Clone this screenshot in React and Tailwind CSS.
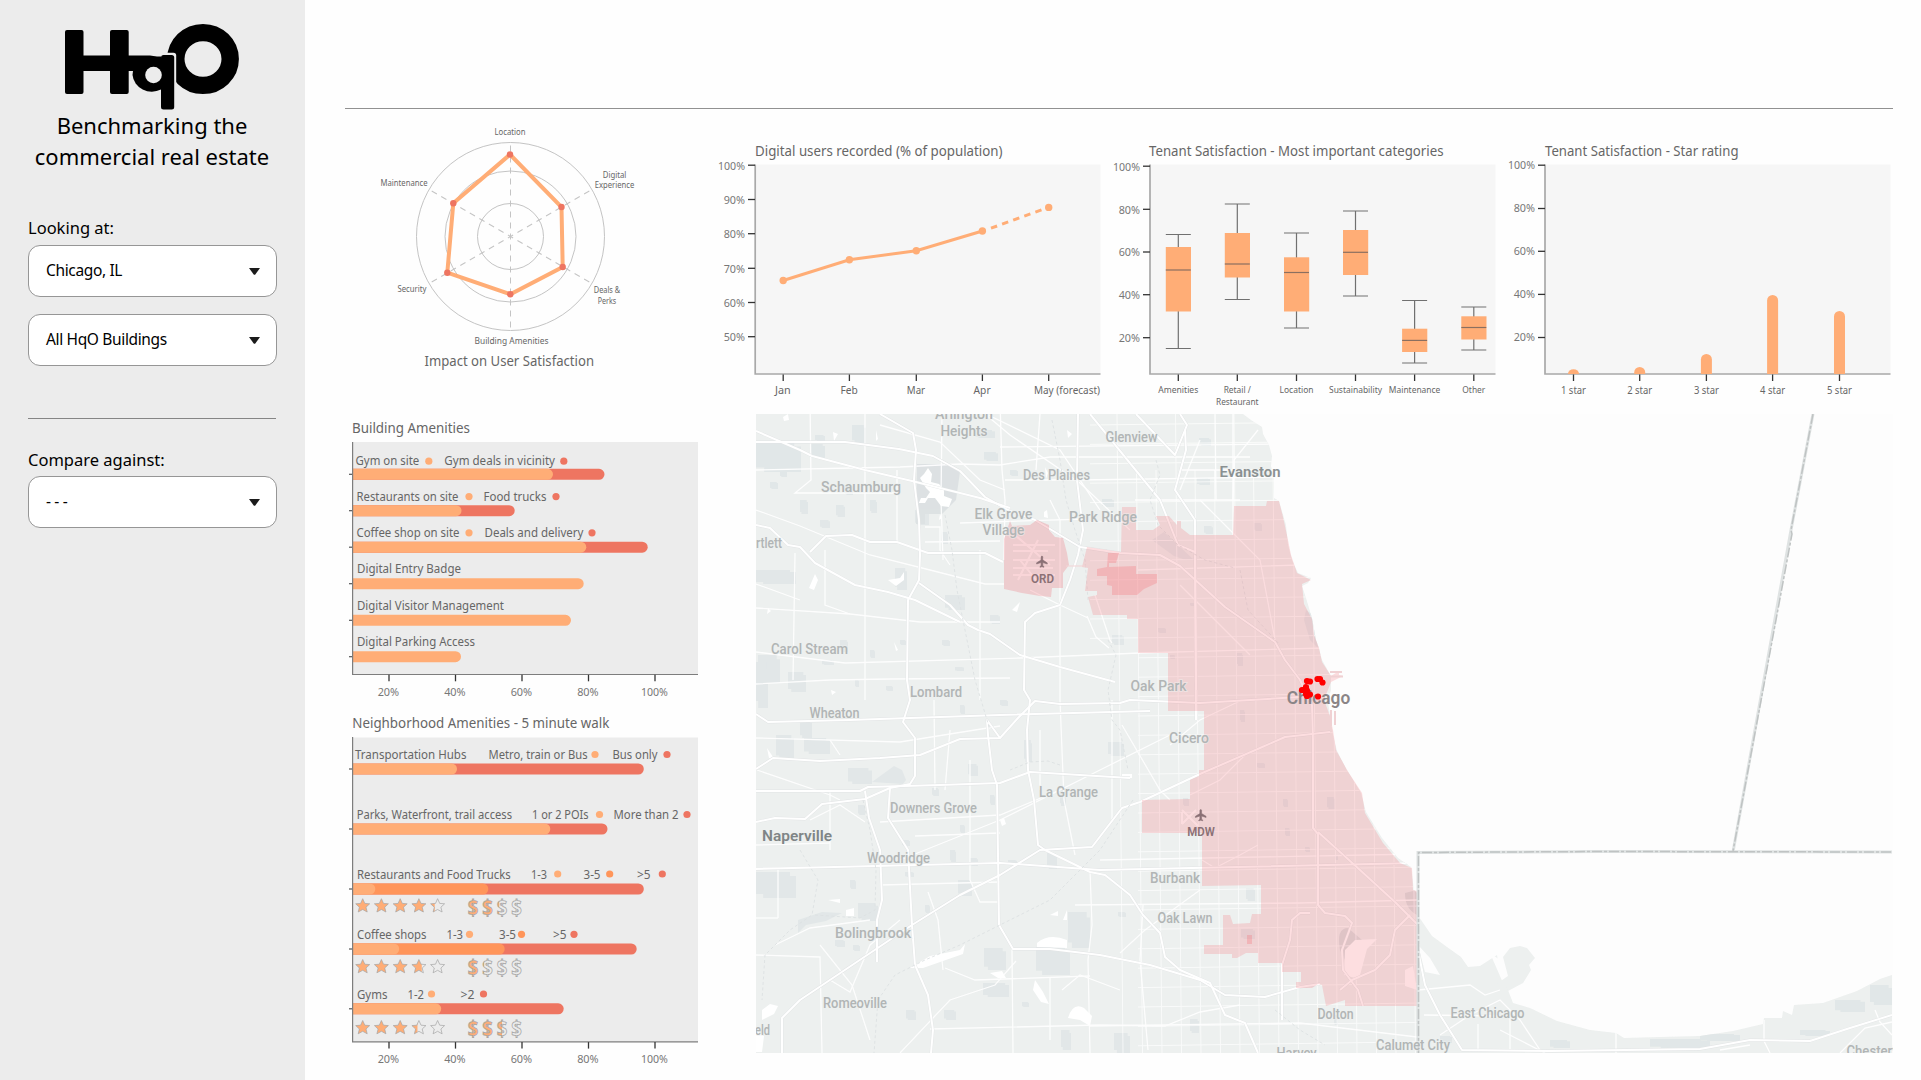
import React from "react";

const ORANGE = "#ffad76";
const DEEP = "#ff955a";
const RED = "#ee7561";

/* Chart label: x/y is the baseline point, w the set width of the string. */
function T({ x, y, w, s = 12, a = "start", fill = "#666", children, ...rest }) {
  return (
    <text x={x} y={y} fontSize={s} textAnchor={a} fill={fill} textLength={w} lengthAdjust="spacingAndGlyphs" {...rest}>
      {children}
    </text>
  );
}

function Chart({ x, y, w, h, children }) {
  return (
    <svg viewBox={`${x} ${y} ${w} ${h}`} width={w} height={h} className="block shrink-0">
      {children}
    </svg>
  );
}

function Logo() {
  return (
    <svg viewBox="60 20 184 92" width="184" height="92" className="block" aria-label="HqO">
      <ellipse cx="203" cy="59" rx="27.200" ry="26.400" fill="none" stroke="#000" strokeWidth="17.400" />
      <path d="M165 52.800h8.500q2.700 0 2.700 2.700V84l-4 5h-9z" fill="#ececec" />
      <rect x="65" y="30" width="18.500" height="64" rx="2" />
      <rect x="110" y="30" width="18.700" height="64" rx="2" />
      <path d="M80 55.500h70q7 .5 11 4V71H80z" />
      <path d="M161 89.500a19.500 18.500 0 0 1-28.500-14.500q0-12 10-18.500H161z" />
      <rect x="161" y="55" width="13.200" height="54.500" rx="2.500" />
      <circle cx="153.500" cy="75" r="8.300" fill="#ececec" />
    </svg>
  );
}

function Select({ children, className = "" }) {
  return (
    <button
      className={`flex h-[52px] w-[249px] items-center justify-between rounded-[12px] border border-[#969696] bg-white pr-[16px] pl-[17px] text-left text-[15.5px] tracking-[-0.35px] text-black ${className}`}
    >
      <span className="-mt-[1px]">{children}</span>
      <svg width="11" height="7" viewBox="0 0 11 7"><path d="M0 0h11L6.500 6.200q-1 1.200-2 0z" fill="#1b1b1b" /></svg>
    </button>
  );
}

function Sidebar() {
  return (
    <aside className="flex h-[1080px] w-[305px] shrink-0 flex-col bg-[#ececec] pl-[28px] text-black">
      <div className="mt-[20px] pl-[32px]"><Logo /></div>
      <h1 className="-mt-[2px] w-[248px] text-center text-[22px] leading-[30.5px] whitespace-nowrap">
        Benchmarking the
        <br />
        commercial real estate
      </h1>
      <div className="mt-[45px] h-[29px] text-[16.5px] leading-[24px]">Looking at:</div>
      <Select>Chicago, IL</Select>
      <Select className="mt-[17px]">All HqO Buildings</Select>
      <hr className="mt-[52px] w-[248px] border-[#858585]" />
      <div className="mt-[29px] h-[28px] text-[16.5px] leading-[24px]">Compare against:</div>
      <Select>- - -</Select>
    </aside>
  );
}

function Radar() {
  const spokes = [0, 60, 120, 180, 240, 300];
  const pts = [[510, 154.5], [561.5, 207], [562.7, 267], [510.3, 294.3], [447.3, 272.7], [453.3, 203.3]];
  return (
    <Chart x={345} y={109} w={370} h={300}>
      {[94, 65.5, 33].map((r) => <circle key={r} cx="510.5" cy="236.500" r={r} fill="none" stroke="#c4c4c4" />)}
      {spokes.map((d) => (
        <line key={d} x1="510.500" y1="236.500" x2="510.500" y2="142.500" stroke="#c4c4c4" strokeDasharray="6 5" strokeDashoffset="3" transform={`rotate(${d} 510.5 236.5)`} />
      ))}
      <polygon points={pts.join(" ")} fill="none" stroke={ORANGE} strokeWidth="4" />
      {pts.map(([x, y]) => <circle key={y} cx={x} cy={y} r="3.200" fill={RED} />)}
      <T x={510} y={135} w={31} s={8.2} a="middle">Location</T>
      <T x={614.5} y={177.500} w={23.500} s={8.200} a="middle">Digital</T>
      <T x={614.500} y={188.300} w={39.500} s={8.200} a="middle">Experience</T>
      <T x={404} y={185.500} w={47} s={8.200} a="middle">Maintenance</T>
      <T x={412} y={292} w={29} s={8.200} a="middle">Security</T>
      <T x={607} y={293} w={26.500} s={8.200} a="middle">Deals &amp;</T>
      <T x={607} y={304} w={18.500} s={8.200} a="middle">Perks</T>
      <T x={511.500} y={343.500} w={74} s={8.200} a="middle">Building Amenities</T>
      <T x={424.500} y={366.300} w={169.500} s={14}>Impact on User Satisfaction</T>
    </Chart>
  );
}

function YAxis({ x, ticks, labels, dy = 4.3 }) {
  return ticks.map((y, i) => (
    <g key={y}>
      <line x1={x - 7} x2={x} y1={y} y2={y} stroke="#333" strokeWidth="1.300" />
      <T x={x - 10} y={y + dy} w={labels[i].length === 4 ? 27 : 21.300} s={11.500} a="end" fill="#777">{labels[i]}</T>
    </g>
  ));
}

function Plot({ x, w }) {
  return (
    <>
      <rect x={x} y="164.500" width={w} height="210" fill="#f6f6f6" />
      <path d={`M${x} 164.500V374H${x + w}`} fill="none" stroke="#a9a9a9" strokeWidth="1.700" />
    </>
  );
}

const XTick = ({ x, y = 374.500 }) => <line x1={x} x2={x} y1={y} y2={y + 6.500} stroke="#333" strokeWidth="1.300" />;

function UsersChart() {
  const pts = [[783.2, 280.5], [849.4, 259.8], [916.3, 250.7], [982.4, 231], [1048.700, 207.400]];
  const labels = [["Jan", 15.700], ["Feb", 17.300], ["Mar", 18.300], ["Apr", 17], ["May (forecast)", 66]];
  return (
    <Chart x={715} y={109} w={395} h={305}>
      <T x={755} y={156.300} w={247.500} s={14}>Digital users recorded (% of population)</T>
      <Plot x={755.200} w={345.300} />
      <YAxis x={755} ticks={[165.200, 199.500, 233.700, 268.300, 302.500, 336.700]} labels={["100%", "90%", "80%", "70%", "60%", "50%"]} />
      <polyline points={pts.slice(0, 4).join(" ")} fill="none" stroke={ORANGE} strokeWidth="3" />
      <path d="M991 228.200L1045 208.600" stroke={ORANGE} strokeWidth="3" strokeDasharray="6.500 5.300" />
      {pts.map(([x, y], i) => (
        <g key={x}>
          <circle cx={x} cy={y} r="3.700" fill={ORANGE} />
          <XTick x={x} />
          <T x={i === 4 ? 1067 : x - 0.300} y={394} w={labels[i][1]} s={11.500} a="middle">{labels[i][0]}</T>
        </g>
      ))}
    </Chart>
  );
}

function BoxChart() {
  const data = [
    [1178.300, 234.500, 247, 270, 311.500, 348.500, "Amenities", 40],
    [1237.300, 204, 233, 264, 277.500, 299.500, "Retail /", 27.300],
    [1296.500, 233, 257.300, 272.500, 311.500, 328, "Location", 34],
    [1355.500, 211, 230, 252.300, 275, 296, "Sustainability", 53],
    [1414.600, 300.500, 328.700, 340.400, 352, 363, "Maintenance", 51.500],
    [1473.800, 307, 316.300, 327.500, 339.500, 350, "Other", 23],
  ];
  return (
    <Chart x={1110} y={109} w={396} h={305}>
      <T x={1149} y={156.300} w={294.500} s={14}>Tenant Satisfaction - Most important categories</T>
      <Plot x={1150} w={345.500} />
      <YAxis x={1150} ticks={[166.200, 209.300, 252, 294.700, 337.700]} labels={["100%", "80%", "60%", "40%", "20%"]} />
      {data.map(([x, top, q3, med, q1, bot, label, w]) => (
        <g key={x} stroke="#707070" strokeWidth="1.200">
          <path d={`M${x - 12.500} ${top}h25M${x - 12.500} ${bot}h25M${x} ${top}V${bot}`} />
          <rect x={x - 12.500} y={q3} width="25.200" height={q1 - q3} fill={ORANGE} stroke="none" />
          <path d={`M${x - 12.500} ${med}h25`} stroke="#8b6f60" />
          <g stroke="none">
            <T x={x} y={393} w={w} s={9.300} a="middle">{label}</T>
          </g>
          <XTick x={x} />
        </g>
      ))}
      <T x={1237.300} y={405} w={42.500} s={9.300} a="middle">Restaurant</T>
    </Chart>
  );
}

function StarChart() {
  const bars = [[1573.500, 369.200], [1639.700, 367], [1706.400, 354], [1772.600, 295], [1839.500, 311]];
  return (
    <Chart x={1506} y={109} w={415} h={305}>
      <T x={1545} y={156.300} w={193.500} s={14}>Tenant Satisfaction - Star rating</T>
      <Plot x={1545} w={345.500} />
      <YAxis x={1545} ticks={[165.200, 208.500, 251.300, 294.400, 337.500]} labels={["100%", "80%", "60%", "40%", "20%"]} dy={3.500} />
      {bars.map(([x, top], i) => (
        <g key={x}>
          <path d={`M${x - 5.500} 374V${Math.min(374, top + 5.500)}a5.500 ${Math.min(5.500, 374 - top)} 0 0 1 11 0V374z`} fill={ORANGE} />
          <XTick x={x} />
          <T x={x} y={394} w={25} s={11.500} a="middle">{`${i + 1} star`}</T>
        </g>
      ))}
    </Chart>
  );
}

/* Horizontal bar built from overlapping segments, the longest drawn first. */
function HBar({ y, segs }) {
  return (
    <g>
      {[...segs].reverse().map(([end, color]) => (
        <path key={end} d={`M353 ${y - 5.500}H${end - 5.500}a5.500 5.500 0 0 1 0 11H353z`} fill={color} />
      ))}
      <line x1="349" x2="353" y1={y} y2={y} stroke="#555" strokeWidth="1.200" />
    </g>
  );
}

function PercentAxis({ top, bottom }) {
  return (
    <>
      <path d={`M352.600 ${top}V${bottom}H698`} fill="none" stroke="#7d7d7d" strokeWidth="1.200" />
      {[[389, "20%"], [455.500, "40%"], [522, "60%"], [588.500, "80%"], [655, "100%"]].map(([x, l]) => (
        <g key={l}>
          <XTick x={x} y={bottom + 0.300} />
          <T x={x - 0.600} y={bottom + 21.100} w={l.length === 4 ? 27 : 21.500} s={11.500} a="middle" fill="#777">{l}</T>
        </g>
      ))}
    </>
  );
}

const Dots = ({ items }) => items.map(([x, y, c]) => <circle key={`${x}-${y}`} cx={x} cy={y} r="3.600" fill={c} />);

const Labels = ({ items }) =>
  items.map(([x, end, y, s]) => <T key={`${x}-${y}`} x={x} y={y} w={end - x} s={12}>{s}</T>);

function BuildingChart() {
  return (
    <Chart x={345} y={409} w={370} h={297}>
      <T x={352} y={433.300} w={118} s={14}>Building Amenities</T>
      <rect x="353" y="442" width="345" height="232" fill="#ececec" />
      <Labels
        items={[
          [355.500, 419.300, 464.700, "Gym on site"], [444.300, 555, 464.700, "Gym deals in vicinity"],
          [356.500, 458.500, 500.700, "Restaurants on site"], [483.500, 546.500, 500.700, "Food trucks"],
          [356.500, 459.500, 537, "Coffee shop on site"], [484.500, 583.500, 537, "Deals and delivery"],
          [357, 461, 573.300, "Digital Entry Badge"], [357, 504, 609.500, "Digital Visitor Management"], [357, 475, 645.500, "Digital Parking Access"],
        ]}
      />
      <Dots items={[[428.800, 461.200, ORANGE], [563.800, 461.200, RED], [469, 496.600, ORANGE], [556, 496.600, RED], [469, 532.800, ORANGE], [592, 532.800, RED]]} />
      <HBar y={474.300} segs={[[553, ORANGE], [604.500, RED]]} />
      <HBar y={510.700} segs={[[461.500, ORANGE], [514.700, RED]]} />
      <HBar y={547.200} segs={[[586.300, ORANGE], [647.700, RED]]} />
      <HBar y={583.700} segs={[[583.700, ORANGE]]} />
      <HBar y={620.300} segs={[[571, ORANGE]]} />
      <HBar y={656.700} segs={[[461, ORANGE]]} />
      <PercentAxis top={442} bottom={674.500} />
    </Chart>
  );
}

const STAR = "M0 -7L2.100 -2.300L7 -1.900L3.300 1.500L4.500 6.300L0 3.800L-4.500 6.300L-3.300 1.500L-7 -1.900L-2.100 -2.300Z";

function Ratings({ y, id, stars, dollars }) {
  const part = (n, i) => Math.max(0, Math.min(1, n - i));
  return (
    <g stroke="#a5a5a5" strokeWidth="0.700">
      {[362.700, 381.400, 400.200, 418.900, 437.600].map((x, i) => (
        <g key={x} transform={`translate(${x} ${y})`}>
          <clipPath id={`s${id}${i}`}><rect x="-7.200" y="-8" width={14.400 * part(stars, i)} height="16" /></clipPath>
          <path d={STAR} fill={ORANGE} stroke="none" clipPath={`url(#s${id}${i})`} />
          <path d={STAR} fill="none" />
        </g>
      ))}
      {[473, 487.500, 502, 516.500].map((x, i) => {
        const glyph = { x: 0, y: 6.600, fontSize: 18.500, fontWeight: 700, textAnchor: "middle" };
        return (
          <g key={x} transform={`translate(${x} ${y + 1.500}) scale(1 1.12)`}>
            <clipPath id={`d${id}${i}`}><rect x="-5.500" y="-12" width={11 * part(dollars, i)} height="24" /></clipPath>
            <text {...glyph} fill={ORANGE} stroke="none" clipPath={`url(#d${id}${i})`}>$</text>
            <text {...glyph} fill="none">$</text>
          </g>
        );
      })}
    </g>
  );
}

function NeighborhoodChart() {
  return (
    <Chart x={345} y={706} w={370} h={374}>
      <T x={352.300} y={728} w={257} s={14}>Neighborhood Amenities - 5 minute walk</T>
      <rect x="353" y="737.500" width="345" height="304" fill="#ececec" />
      <Labels
        items={[
          [355, 466.500, 759.300, "Transportation Hubs"], [488.500, 587.500, 759.300, "Metro, train or Bus"], [612.500, 657.500, 759.300, "Bus only"],
          [356.700, 512, 819, "Parks, Waterfront, trail access"], [532, 588.500, 819, "1 or 2 POIs"], [613.500, 678.500, 819, "More than 2"],
          [357, 510.700, 878.700, "Restaurants and Food Trucks"], [531, 547, 878.700, "1-3"], [583.500, 600.500, 878.700, "3-5"], [637, 650.500, 878.700, ">5"],
          [357, 426.500, 938.500, "Coffee shops"], [446.500, 463, 938.500, "1-3"], [499, 516, 938.500, "3-5"], [553, 566.500, 938.500, ">5"],
          [357, 387.500, 998.500, "Gyms"], [407.500, 424, 998.500, "1-2"], [460.500, 474.500, 998.500, ">2"],
        ]}
      />
      <Dots
        items={[
          [595, 754.500, ORANGE], [667, 754.500, RED], [599.500, 814.500, ORANGE], [687, 814.500, RED],
          [557.700, 874, ORANGE], [609.700, 874, DEEP], [662.300, 874, RED], [469.500, 934.300, ORANGE], [521.500, 934.300, DEEP], [574, 934.300, RED],
          [431.500, 994, ORANGE], [483.500, 994, RED],
        ]}
      />
      <HBar y={769} segs={[[457, ORANGE], [643.800, RED]]} />
      <HBar y={829} segs={[[550.300, ORANGE], [607.500, RED]]} />
      <HBar y={889} segs={[[375.300, ORANGE], [488.300, DEEP], [643.800, RED]]} />
      <HBar y={949} segs={[[399.200, ORANGE], [504.700, DEEP], [636.700, RED]]} />
      <HBar y={1008.800} segs={[[441.200, ORANGE], [563.700, RED]]} />
      <Ratings id="a" y={905.700} stars={4.300} dollars={2.250} />
      <Ratings id="b" y={966.500} stars={3.700} dollars={1.200} />
      <Ratings id="c" y={1027.500} stars={3.400} dollars={2.500} />
      <PercentAxis top={737} bottom={1041.800} />
    </Chart>
  );
}

const LAND =
  "M756 414H1243L1251 420L1262 427L1263 434L1269 445L1272 456L1271 466L1274 480L1274 498L1279 501L1286 525L1288 545L1292 560L1298 573L1311 578L1308 583L1302 586L1306 598L1312 618L1316 640L1319 648L1322 660L1331 676L1331 690L1328 702L1333 735L1337 751L1347 770L1361 793L1366 812L1382 838L1398 858L1411 867L1414 890L1417 893L1419 917L1432 936L1447 947L1461 957L1468 967L1480 966L1497 955L1499 968L1506 976L1506 985L1513 1003L1530 1008L1557 1021L1590 1030L1616 1033L1624 1038L1660 1037L1700 1036L1733 1031L1763 1024L1764 1018L1782 1018L1783 1011L1792 1015L1794 1005L1823 1003L1857 991L1880 979L1892 975V1053H756Z";

const CITY =
  "M1234 506H1266L1267 501L1279 501L1283 517L1288 540L1291 555L1297 573L1311 580L1302 584L1304 604L1312 619L1314 635L1319 648L1322 662L1331 676L1339 671V675L1343 676L1331 682L1324 700L1330 716L1333 730L1336 750L1347 770L1362 793L1365 813L1383 843L1400 863L1412 868L1413 890L1417 891V1006H1345V1000L1326 1006L1322 985L1318 984L1312 988H1296V982H1301V972H1282V963H1258V953H1246L1237 958H1232V954H1204V945H1223V915H1230L1233 924L1250 923L1252 914H1261V885L1202 886V833H1142V800L1190 799V780L1199 776V770H1204V711H1168V653H1138V619H1127V615H1093L1088 597L1097 595V591H1085L1088 568L1082 567L1087 547L1121 552L1122 507H1136V530H1153L1160 525L1156 516H1169L1177 525V521H1181V528L1190 535H1233Z";

const OHARE =
  "M1004 539L1010 521L1012 526L1030 525L1037 520L1049 525V530L1055 537L1063 538L1067 553L1069 565L1063 573V588H1052L1051 597L1040 596L1022 593L1004 589Z";

const ENCLAVE =
  "M1108 553H1119L1116 563L1109 563V567L1136 566V574H1157V583L1144 589L1137 595H1112V586L1107 585V576H1097V569L1107 567ZM1247 935h5v9h-5z";

/* Parks and preserves: x, y, width, height. */
const PARKS =
  "756,442,45,30;810,444,15,14;852,425,14,18;915,510,14,15;756,570,40,14;758,655,22,28;788,672,18,20;756,662,12,46;895,568,12,22;945,595,20,15;975,430,20,8;984,452,14,9;1010,470,8,6;800,720,12,18;776,735,18,24;804,738,26,16;848,768,24,16;756,872,40,26;858,903,20,18;944,1010,12,10;906,1010,10,10;1024,740,8,22;984,948,22,22;1036,947,34,28;1068,912,22,36;958,880,14,16;983,983,26,14;1061,1030,10,20;1114,1033,16,20;1108,742,16,14;1199,438,12,8;1197,478,13,7;1102,499,12,8;1204,526,9,8;1112,635,12,10;1254,523,8,8;1237,653,6,13;1158,628,8,5;1246,888,9,13;1118,912,8,5;1183,798,6,8;1241,929,14,10;1327,797,8,12;1285,828,5,8;1283,799,5,8;1257,763,8,5;1305,847,5,5;1335,855,3,5;1240,710,5,12;1170,655,5,4;1190,603,5,3;968,764,10,12;990,795,5,10;905,872,9,5;808,745,8,6;1060,788,6,18;858,805,7,10;932,788,7,8;820,520,10,8;780,470,7,7;836,505,9,12;845,485,8,10;770,482,8,7;870,500,7,13;815,435,10,6;800,500,8,14;942,532,6,12;855,680,4,7;886,686,7,5;955,667,9,4;942,640,8,6;1022,1002,7,5;1334,1015,4,10;1190,1019,9,14;840,640,8,12;822,660,12,5;900,640,6,5;870,650,5,8;1000,700,8,6;960,705,5,9;850,880,6,9;902,840,8,6;960,825,5,8;970,858,8,8;950,850,6,12;1008,860,9,5;925,905,5,8;835,940,10,7;853,945,7,6;1047,853,10,16;990,615,10,9;1440,1036,12,7;1650,1039,60,9;1700,1034,40,7;1835,1000,30,12;1870,985,22,20;1800,1030,30,6;1550,1040,20,8"
    .split(";")
    .map((p) => p.split(",").map(Number));

const HIGHWAYS = [
  "756,442 845,442 899,449 933,456 960,471 985,497 1008,510 1035,520 1060,535 1080,547 1120,553 1160,555 1180,566 1225,607 1275,642 1285,660 1300,680 1312,705 1313,740 1313,828 1318,834 1318,905 1325,913 1345,916 1352,923 1342,950 1343,970 1358,990 1363,1006",
  "756,431 800,450 812,456 865,470 912,481 980,498 1010,508",
  "880,414 913,433 916,450 914,480 919,520 920,555 919,580 908,600 907,680 910,700 903,722 915,738 915,776 910,784 890,788 888,818 908,850 912,925 915,965 928,995 933,1030 931,1053",
  "919,583 950,605 968,625 978,630 990,634 1020,655 1060,667 1115,682",
  "756,525 770,528 788,545 800,547 815,563 855,585 888,592 915,600 960,622",
  "810,552 826,536 852,535 870,542 897,542 928,553 985,553 1003,562",
  "1078,414 1077,480 1083,530 1078,555 1070,580 1060,605 1035,613 1025,622 1024,690 1030,700 1027,730 1028,770 1034,800 1038,845 1045,850 1090,872 1105,875 1130,895 1143,915 1160,933 1165,957 1180,970 1210,983 1225,1015 1245,1023 1258,1053",
  "782,1053 782,1018 800,1000 912,925 960,895 1000,875 1040,850 1092,847 1105,830 1122,808 1140,802 1200,774 1260,748 1285,737 1330,732",
  "756,769 773,758 820,761 880,758 920,755 960,739 1000,738 1018,718 1035,701 1060,704 1120,703 1130,700 1200,703 1300,697",
  "756,791 860,791 868,787 940,785 1000,783 1030,772 1130,778",
  "756,822 775,818 805,819 822,804 865,799 890,788",
  "865,791 869,818 880,850 882,900 877,920 877,962",
  "1000,738 987,720 988,735 992,770 997,785 999,925 1013,949 1050,949 1100,955 1150,965 1200,980 1225,995 1265,997 1300,987 1320,984",
  "1090,414 1160,500 1178,545 1195,552 1196,720",
  "1136,414 1175,455 1187,425 1180,414",
  "1185,430 1186,450 1175,490 1195,520 1196,690",
  "1418,950 1425,985 1440,1015 1462,1050 1550,1051 1700,1049 1750,1040 1810,1041 1850,1028 1892,1015",
  "1318,832 1360,870 1395,902 1418,925",
  "1340,990 1352,980 1375,970 1390,955 1395,930 1410,915",
  "756,714 768,722 850,720 1000,715 1150,711",
  "756,869 1000,863 1100,870 1417,863",
  "1282,1020 1282,965 1290,940 1292,920 1300,913 1310,913",
];

const STREETS = [
  "756,470 900,467 960,464 1000,465 1050,457 1250,457", "756,652 845,663 1020,658 1140,653", "756,608 850,614 920,622 1000,622", "756,684 830,680 890,679 1010,678",
  "865,414 865,700", "810,400 811,480 795,493 900,493", "897,470 897,542", "942,414 941,500 943,560", "980,550 980,700", "1000,400 1002,470 1005,500 1004,560", "986,414 1060,450 1100,510",
  "925,527 940,527 940,550 950,565", "825,550 825,605 850,614", "795,553 793,680", "1040,414 1036,470", "1050,500 1060,520 1060,700 1064,800 1075,855", "756,584 800,600",
  "900,860 1000,820 1100,770 1170,735", "900,920 870,945 850,992 830,980", "945,790 950,730", "934,700 935,790", "970,760 970,880 980,902 1000,902", "915,836 1000,833",
  "756,868 900,866 1000,862", "928,892 938,920 943,970", "756,955 820,957 822,1053", "870,920 810,928 775,945", "820,945 852,985 870,1040", "880,885 1000,882", "1016,961 995,985 950,1000 900,1053",
  "930,1029 1100,1025 1165,1026 1200,1012 1240,1005", "1012,949 1013,1053", "1090,870 1092,925 1088,960 1090,1053", "945,968 975,980 1090,976", "1050,978 1050,1040", "1143,905 1140,960 1148,1050",
  "756,918 778,918", "778,868 778,918", "757,770 830,795 840,800", "830,740 840,755", "1100,860 1417,854", "1075,905 1300,903 1417,900", "1090,1026 1300,1023 1417,1037", "1062,990 1080,975 1120,990",
  "1120,953 1145,930 1200,890", "1122,725 1160,790 1170,800", "1440,1035 1470,1015 1500,1000 1520,1020 1540,1050", "1418,990 1470,985 1485,995 1500,990", "1478,1024 1478,1050", "1510,1010 1510,1052", "1616,1033 1616,1053",
  "1764,1020 1764,1041 1770,1053", "1720,1050 1750,1045", "1840,1053 1865,1028 1892,1022", "1875,1010 1880,1022 1892,1035", "1500,1030 1545,1053", "1424,1015 1500,1016", "1180,585 1215,620 1250,655", "1200,500 1260,560 1275,640",
  "1202,860 1215,868 1240,855 1258,845", "1242,700 1200,720 1170,745", "1190,795 1220,780 1245,755 1265,745",
  "756,510 800,526 870,555 930,570 985,584 1004,584", "1030,590 1060,605 1088,618", "1095,595 1110,640 1112,643", "1087,616 1096,637 1109,648",
  "1005,480 1080,480 1280,477", "1000,447 1280,444", "960,523 1085,519", "925,542 1000,541", "880,425 940,442 980,480 1005,490", "985,414 1010,435 1080,483 1130,530", "1135,500 1240,500", "1112,700 1112,820", "1180,470 1275,470", "1138,653 1325,648",
  "1200,440 1180,490", "1215,414 1216,500", "1233,414 1233,535", "1258,430 1234,460 1233,500", "1138,570 1300,565", "756,738 900,742 1000,726", "830,790 830,850", "810,820 840,805 865,822", "756,845 830,843", "1040,730 1040,790", "880,822 1000,815 1060,790",
];

const LABELS = [
  ["Arlington", 964, 418.500, 58, 14], ["Heights", 964, 435.500, 47, 14], ["Glenview", 1131.500, 442, 52, 14], ["Des Plaines", 1056.500, 480, 67, 14],
  ["Schaumburg", 861, 492, 80, 14.500], ["Elk Grove", 1003.500, 519, 58, 14], ["Village", 1003.500, 535, 42, 14], ["Park Ridge", 1103, 521.500, 68, 14],
  ["rtlett", 769, 548, 26, 14], ["Carol Stream", 809.500, 653.500, 77, 14], ["Lombard", 936, 697, 52, 14], ["Wheaton", 834.500, 717.500, 50, 14],
  ["Oak Park", 1158.500, 690.500, 56, 14], ["Cicero", 1189, 743, 40, 14], ["La Grange", 1068.500, 797, 59, 14], ["Downers Grove", 933.500, 812.500, 87, 14],
  ["Woodridge", 898.500, 863, 63, 14], ["Bolingbrook", 873, 937.500, 76, 14], ["Romeoville", 855, 1007.500, 64, 14], ["eld", 762.500, 1035, 15, 14],
  ["Burbank", 1175, 882.500, 50, 14], ["Oak Lawn", 1185, 923, 55, 14], ["Dolton", 1335.500, 1019, 36, 14], ["East Chicago", 1487.500, 1018, 74, 14],
  ["Calumet City", 1413, 1049.500, 74, 14], ["Harvey", 1296.500, 1057.500, 40, 14], ["Chesterton", 1879, 1055.500, 65, 14],
];

const PLANE = "M21 16v-2l-8-5V3.500c0-.83-.67-1.500-1.500-1.500S10 2.670 10 3.500V9l-8 5v2l8-2.500V19l-2 1.500V22l3.500-1 3.500 1v-1.500L13 19v-5.500l8 2.500z";

const BUILDINGS = [[1307, 681], [1310, 681.500], [1317.500, 679], [1320, 679], [1322.500, 682.500], [1306, 687], [1302, 690], [1304.500, 689.500], [1306, 694], [1310, 694.500], [1307, 696], [1318, 696.500], [1307, 690.500]];

const LAKES =
  "M918 505l3-7 5 0 4-6-4-4-6-10 4-4 4-6 4 6-1 8 8 2 5 6 0 6 8 3-3 8-8-1-6-8-7 0-3 5-6 0zM809 588l6-14 3 6-4 10zM888 580l12-2 4-6 0 8-8 6zM1012 610l8-8-3 10zM1037 943q12-10 30-3v8l-30-1zM1050 915l8-4v5zM1063 920l4-10v10zM1035 980l8 12 6 12 -8-2-8-12zM1068 1018q5-16 16-10l8 8-2 10-10-6zM762 1010l8-6 8 2-4 8-12 6zM846 910l8-2v8h-8zM828 900l12-1v4zM990 973l12-2 4 7h-8zM756 1030l8 6-2 16-6 0zM910 968l20-12 30-6 5-6-2 10-40 14zM767 748l8 12-6-2zM1122 774h10v4h-10zM1000 820l4-2 2 6-4 2zM783 417l5-3 1 6-5 1zM1067 430l5 4-4 4zM833 432l5 2-4 7zM876 430l2 9-2 2zM940 514l2 4-3 2zM768 608l3 3-4 3zM894 642l4 8-2 1zM831 690l5 2-4 3zM1045 467l3 6-2 6zM1044 512l3-2 1 8-4-1z";

function RegionMap() {
  const rows = Array.from({ length: 33 }, (_, i) => 425 + i * 19.400);
  const cols = Array.from({ length: 16 }, (_, i) => 1119 + i * 19.500);
  return (
    <svg viewBox="756 414 1136.500 639" width="1136.500" height="639" className="ml-[41px] block" style={{ fontFamily: "Roboto, sans-serif" }}>
      <clipPath id="land"><path d={LAND} /></clipPath>
      <rect x="756" y="414" width="1137" height="639" fill="#fdfdfd" />
      <path d={LAND} fill="#edf0ef" />
      <path d="M1490 953L1503 983L1506 976L1500 960ZM1418 945L1430 958L1440 975L1425 972ZM1502 983L1513 987L1520 980L1530 968L1528 962L1535 957L1520 946L1510 948L1503 957Z" fill="#fdfdfd" />
      <path d="M1503 957L1510 948L1520 946L1527 948L1535 958L1529 965L1531 970L1523 983L1508 991L1505 997L1495 985L1508 976Z" fill="#edf0ef" />
      <g clipPath="url(#land)">
        <g fill="#e2e7e8">
          {PARKS.map(([x, y, w, h], i) => (
            <path key={i} d={`M${x} ${y}H${x + w * 0.850}V${y + h * 0.150}H${x + w}V${y + h}H${x + w * 0.180}V${y + h * 0.850}H${x}Z`} />
          ))}
          <path d="M872 782l22-16 8 4 4 10-3 4zM798 920l24-8 20 1-16 8-20 4-8 8zM1152 540l12-8 30 28-8 0-12-4z" />
          <path d="M917 464h30l13 8-4 28-14 14-17 0v10h-9z" fill="#dde2e3" />
          <path d="M1306 610l6 4 6 34-8-8-6-20z" />
          <path d="M1340 950q-4-22 8-22l14 12-12 30zM1405 893l12-3v25q-12-6-12-22z" fill="#d9dedf" />
        </g>
        <path d={LAKES} fill="#fff" />
        <path d="M1345 950l10-10 22-1-10 10-8 30-15-4zM1405 970l8-4 4 24-12-4z" fill="#fff" />
        <g fill="none" stroke="#fff" strokeWidth="1" opacity="0.700">
          {rows.map((y, i) => <line key={y} x1={i < 12 ? 1090 : 1138} x2="1420" y1={y} y2={y - 4} />)}
          {cols.map((x, i) => <line key={x} x1={x - 2} x2={x + 4} y1={i % 3 === 0 ? 414 : 470} y2="1053" />)}
        </g>
        <g fill="none" stroke="#fff" strokeWidth="1.300" opacity="0.900">
          {STREETS.map((p) => <polyline key={p} points={p} />)}
          <path d="M1013 545h42M1013 551h35M1013 560h42M1013 568h40M1013 575h42M1015 535l35 30M1020 560l20 25M1018 580l20-40M1182 810l16 16M1182 824l14-14M1182 812v12" strokeWidth="2" />
        </g>
        <g fill="none" stroke="#e2e4e5" strokeWidth="2.800" strokeLinejoin="round">{HIGHWAYS.map((p) => <polyline key={p} points={p} />)}</g>
        <g fill="none" stroke="#fff" strokeWidth="2" strokeLinejoin="round">{HIGHWAYS.map((p) => <polyline key={p} points={p} />)}</g>
        <g fill="none" stroke="#dde1e2" strokeWidth="0.900" strokeDasharray="3 2.500">
          <path d="M945 515L952 550 957 590 965 630 975 680 990 730" />
          <path d="M1052 420L1060 460 1066 500 1075 530 1085 560 1088 600" />
          <path d="M1108 640L1116 655 1108 690 1112 720 1120 730 1128 770" />
          <path d="M800 850L818 880 812 915 790 930 765 955 762 1000M863 800L870 830 876 870 875 910 860 918 815 915" />
          <path d="M1133 800L1100 850 1050 900 1000 925 960 945 925 960 895 975 878 1000 874 1053M1060 765L1048 761 1030 762 1010 770" />
          <path d="M1156 460L1160 475 1150 500 1158 525 1178 545 1205 560 1235 568M1275 1010L1300 1030 1325 1045M1240 570L1248 610 1280 645" />
        </g>
      </g>
      <path d={CITY} fill="#f7646e" opacity="0.210" />
      <path d="M1330 672H1342M1330 676.500H1343M1331 710v16M1335 711v14" stroke="#f0d1d3" strokeWidth="2" />
      <path d={OHARE} fill="#f0606a" opacity="0.250" />
      <path d={ENCLAVE} fill="#f7646e" opacity="0.260" />
      <path d="M1066 566H1086" stroke="#f3d3d5" />
      <g fill="none" stroke="#dfe3e3" strokeWidth="3"><path d="M1813 414L1791 530L1733 852M1418 1053V852.500L1600 851.500L1892 852" /></g>
      <g fill="none" stroke="#bfc3c3" strokeWidth="1.500" strokeDasharray="10 2 3 2"><path d="M1813 414L1791 530L1792 534L1733 851M1418.500 1053V852.500L1600 851.500L1892 852" /></g>
      <g fontWeight="500">
        {LABELS.map(([s, x, y, w, size]) => (
          <T key={s} x={x} y={y} w={w} s={size} a="middle" fill="#b1b5b5" stroke="#edf0ef" strokeOpacity="0.500" strokeWidth="2" paintOrder="stroke">{s}</T>
        ))}
        <T x={1250} y={476.500} w={61} s={15} a="middle" fill="#8a9091" fontWeight="600">Evanston</T>
        <T x={797} y={841} w={70} s={15} a="middle" fill="#7f8586" fontWeight="600">Naperville</T>
      </g>
      <g fill="#8a7075">
        <path d={PLANE} transform="translate(1035.500 555) scale(.56)" stroke="#8a7075" strokeWidth="1" />
        <path d={PLANE} transform="translate(1194.300 808.500) scale(.56)" stroke="#8a7075" strokeWidth="1" />
        <T x={1042.500} y={582.500} w={23} s={12.500} a="middle" fill="#8a7075" fontWeight="600">ORD</T>
        <T x={1201} y={836} w={27.500} s={12.500} a="middle" fill="#8a7075" fontWeight="600">MDW</T>
      </g>
      <T x={1318.500} y={704} w={63.500} s={18} a="middle" fill="#8b8587" fontWeight="600">Chicago</T>
      {BUILDINGS.map(([x, y], i) => <circle key={i} cx={x} cy={y} r="3.100" fill="#f00" />)}
    </svg>
  );
}

export default function App() {
  return (
    <div className="flex h-[1080px] w-[1921px] overflow-hidden bg-[#fefefe] font-['Noto_Sans',sans-serif]">
      <Sidebar />
      <main className="flex flex-1 flex-col pl-[40px]">
        <header className="h-[109px] w-[1548px] shrink-0 border-b border-[#919191]" />
        <div className="flex">
          <section className="flex w-[370px] shrink-0 flex-col">
            <Radar />
            <BuildingChart />
            <NeighborhoodChart />
          </section>
          <section className="flex flex-col">
            <div className="flex">
              <UsersChart />
              <BoxChart />
              <StarChart />
            </div>
            <RegionMap />
          </section>
        </div>
      </main>
    </div>
  );
}
